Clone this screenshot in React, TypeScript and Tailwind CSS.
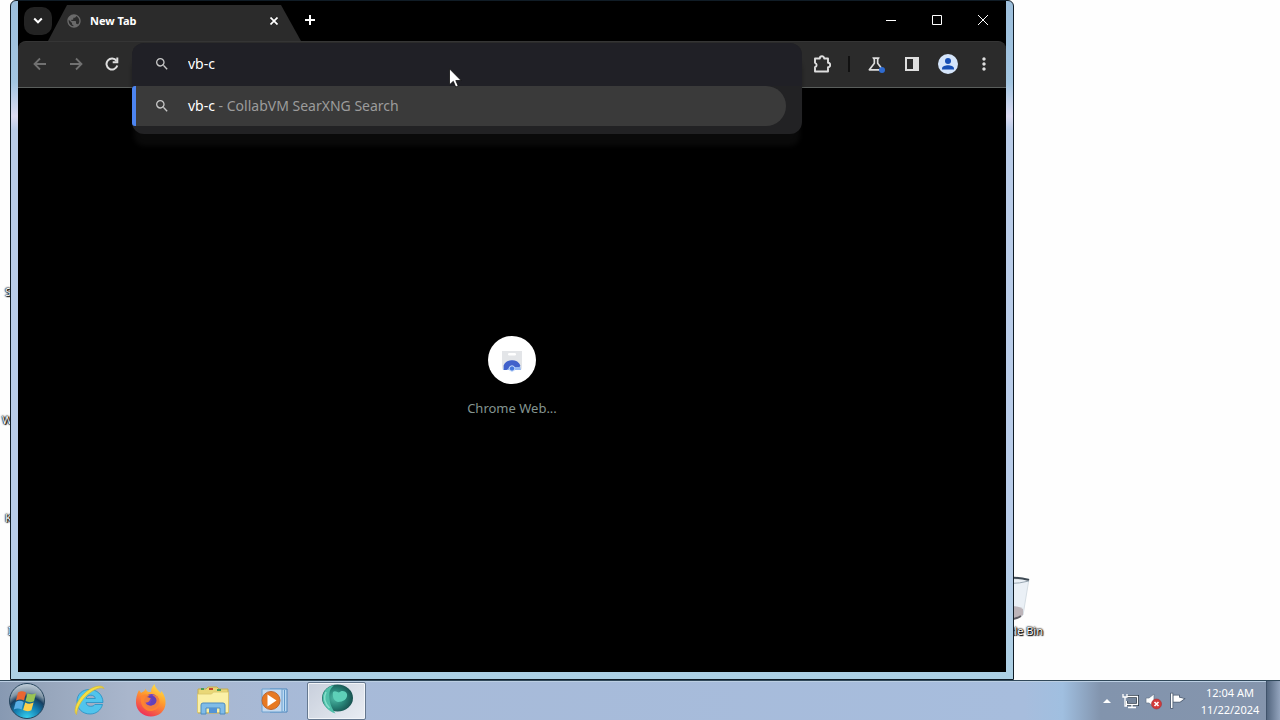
import React, { useState } from "react";
import {
  MdSearch,
  MdOutlineScience,
  MdMoreVert,
  MdPublic,
} from "react-icons/md";

function ToolButton({ label, children }: { label: string; children: React.ReactNode }) {
  return (
    <button type="button" aria-label={label} className="relative flex h-9 w-9 shrink-0 items-center justify-center text-[#dedede]">
      {children}
    </button>
  );
}

function CaptionButton({ label, children }: { label: string; children: React.ReactNode }) {
  return (
    <button type="button" aria-label={label} className="flex h-[38px] w-[46px] items-center justify-center text-white">
      <svg width="12" height="12" viewBox="0 0 12 12" fill="none" stroke="currentColor">
        {children}
      </svg>
    </button>
  );
}

function TabStrip() {
  return (
    <div className="flex h-10 shrink-0 items-start bg-black">
      <button type="button" aria-label="Search tabs" className="mt-[6px] ml-[6px] flex h-7 w-7 shrink-0 items-center justify-center rounded-[10px] bg-[#232323] text-white">
        <svg width="10" height="8" viewBox="0 0 10 8" fill="none" stroke="currentColor" strokeWidth="2">
          <path d="M1.200 1.500L5 5.300l3.800-3.800" />
        </svg>
      </button>
      <div className="-ml-1 mt-1 flex h-9 w-[253px] items-center bg-[#2b2b2b] pr-5 pb-1 pl-[18px] [clip-path:polygon(0_100%,19px_0,calc(100%_-_20px)_0,100%_100%)]">
        <MdPublic size={16} className="shrink-0 text-[#6a6a6a]" />
        <span className="ml-2 flex-1 text-[11px] font-bold text-white">New Tab</span>
        <button type="button" aria-label="Close tab" className="p-[3px] text-white">
          <svg width="8" height="8" viewBox="0 0 8 8" stroke="currentColor" strokeWidth="1.700">
            <path d="M.500.500l7 7M7.500.500l-7 7" />
          </svg>
        </button>
      </div>
      <button type="button" aria-label="New tab" className="mt-[10px] flex h-[18px] w-[18px] items-center justify-center text-white">
        <svg width="12" height="12" viewBox="0 0 12 12" stroke="currentColor" strokeWidth="2">
          <path d="M6 1v10M1 6h10" />
        </svg>
      </button>
      <div className="flex-1" />
      <CaptionButton label="Minimize">
        <path d="M1 6.500h10" />
      </CaptionButton>
      <CaptionButton label="Maximize">
        <path d="M1.500 1.500h9v9h-9z" />
      </CaptionButton>
      <CaptionButton label="Close">
        <path d="M1 1l10 10M11 1L1 11" />
      </CaptionButton>
    </div>
  );
}

function Omnibox() {
  const [query, setQuery] = useState("vb-c");
  return (
    <div className="relative mx-[2px] h-10 min-w-0 flex-1">
      <div className="absolute inset-x-0 -top-px z-10 rounded-xl bg-[#222224] pb-2 shadow-[0_14px_5px_-2px_#0a0a0a]">
        <label className="flex h-[43px] items-center rounded-t-xl bg-[#202026] pl-[22px]">
          <MdSearch size={16} className="shrink-0 text-[#c7c7c7]" />
          <input
            aria-label="Address and search bar"
            value={query}
            onChange={(e) => setQuery(e.target.value)}
            className="ml-[18px] min-w-0 flex-1 bg-transparent text-sm text-white outline-none"
          />
        </label>
        <button type="button" className="mr-4 flex h-10 w-[calc(100%_-_16px)] items-center rounded-l-[3px] rounded-r-[20px] border-l-4 border-[#4c84f0] bg-[#3a3a3a] pl-[18px] text-left text-sm">
          <MdSearch size={16} className="shrink-0 text-[#c7c7c7]" />
          <span className="ml-[18px] text-white">vb-c</span>
          <span className="whitespace-pre text-[#9c9c9c]"> - CollabVM SearXNG Search</span>
        </button>
      </div>
    </div>
  );
}

function Toolbar() {
  return (
    <div className="bg-black">
      <div className="flex h-[47px] items-center rounded-t-lg border-t border-b border-t-[#353535] border-b-[#5a5e5c] bg-[#2b2b2b] px-1 pb-[2px]">
        <ToolButton label="Back">
          <svg width="14" height="14" viewBox="0 0 14 14" fill="none" stroke="#717171" strokeWidth="1.800">
            <path d="M13 7H2M7 1.500L1.500 7 7 12.500" />
          </svg>
        </ToolButton>
        <ToolButton label="Forward">
          <svg width="14" height="14" viewBox="0 0 14 14" fill="none" stroke="#717171" strokeWidth="1.800">
            <path d="M1 7h11M7 1.500L12.500 7 7 12.500" />
          </svg>
        </ToolButton>
        <ToolButton label="Reload">
          <svg width="14" height="14" viewBox="0 0 14 14" fill="none" stroke="currentColor" strokeWidth="2">
            <path d="M12.300 8.500A5.500 5.500 0 1 1 11.500 3.800" />
            <path d="M12.300.500V5.300H7.700" />
          </svg>
        </ToolButton>
        <Omnibox />
        <ToolButton label="Extensions">
          <svg width="18" height="18" viewBox="0 0 18 18">
            <path d="M2 3.500h4.800a2.200 2.200 0 0 1 4.400 0H15v4.300a2.200 2.200 0 0 1 0 4.400V16.500H2v-4.300a2.300 2.300 0 0 0 0-4.400z" fill="none" stroke="currentColor" strokeWidth="1.900" strokeLinejoin="round" />
          </svg>
        </ToolButton>
        <span className="mx-2 h-4 w-[2px] shrink-0 bg-[#111]" />
        <ToolButton label="Experiments">
          <MdOutlineScience size={20} />
          <span className="absolute right-[9px] bottom-[9px] h-[6px] w-[6px] rounded-full bg-[#2f6bd0]" />
        </ToolButton>
        <ToolButton label="Side panel">
          <svg width="14" height="14" viewBox="0 0 14 14">
            <path d="M1 1h12v12H1z" fill="none" stroke="currentColor" strokeWidth="2" />
            <path d="M8 1h5v12H8z" fill="currentColor" />
          </svg>
        </ToolButton>
        <ToolButton label="Profile">
          <svg width="20" height="20" viewBox="0 0 20 20">
            <circle cx="10" cy="10" r="10" fill="#d5e5fb" />
            <circle cx="10" cy="7" r="3" fill="#174fb5" />
            <path d="M4 15.500v-1c0-2 3.500-3.200 6-3.200s6 1.200 6 3.200v1z" fill="#174fb5" />
          </svg>
        </ToolButton>
        <ToolButton label="Menu">
          <MdMoreVert size={20} />
        </ToolButton>
      </div>
    </div>
  );
}

function BrowserWindow() {
  return (
    <section className="absolute top-0 right-[266px] bottom-0 left-[10px] flex flex-col rounded-t-[6px] border border-[#101c26] bg-[linear-gradient(180deg,#9dbfdc_0%,#a3c6e2_12%,#dcdcf2_17%,#bacde9_19%,#b9cdea_80%,#acd0e4_100%)] px-[7px] pb-[7px]">
      <TabStrip />
      <Toolbar />
      <main className="flex flex-1 flex-col items-center bg-black pt-[248px]">
        <a href="#web-store" className="flex flex-col items-center">
          <span className="flex h-12 w-12 items-center justify-center rounded-full bg-white">
            <svg width="24" height="24" viewBox="0 0 24 24">
              <path d="M2 3h20v17a2 2 0 0 1-2 2H4a2 2 0 0 1-2-2z" fill="#e3e5e8" />
              <rect x="8" y="5" width="8" height="2.500" rx="1.200" fill="#fff" />
              <path d="M3 22a9 9.500 0 0 1 18 0z" fill="#91b5f3" />
              <path d="M3.600 17.500a9 8 0 0 1 16.800 0l-1 1.500h-5a3.500 3.500 0 0 0-6 1.500L6.500 22H4z" fill="#4161cb" />
              <circle cx="12" cy="20.500" r="2.700" fill="#4377df" stroke="#c6daf9" />
            </svg>
          </span>
          <span className="mt-[15px] text-[13px] leading-[18px] text-[#849590]">Chrome Web...</span>
        </a>
      </main>
    </section>
  );
}

function StartOrb() {
  return (
    <svg width="38" height="38" viewBox="0 0 38 38">
      <defs>
        <radialGradient id="orb" cx=".5" cy="1" r="1">
          <stop offset="0" stopColor="#38d4f2" />
          <stop offset=".4" stopColor="#1279ac" />
          <stop offset=".62" stopColor="#173f61" />
          <stop offset=".75" stopColor="#8195a5" />
          <stop offset="1" stopColor="#c4d1dd" />
        </radialGradient>
      </defs>
      <circle cx="19" cy="19" r="17.500" fill="url(#orb)" stroke="#26455e" />
      <path d="M10 10.500c3-2 5.500-1.500 8 0l-2 8c-2.500-1.500-5-1.500-8 0z" fill="#ea6631" />
      <path d="M19.500 11.200c3 1.600 5 1.500 8.500 0l-2 8c-3 1.400-5.500 1.200-8.500-.2z" fill="#99c354" />
      <path d="M7.700 20c3-1.800 5.300-1.500 7.900 0l-2 7.500c-2.600-1.500-5-1.500-7.800 0z" fill="#58aee6" />
      <path d="M17.200 20.500c3 1.600 5.500 1.500 8.400.1l-2.200 7.700c-3 1.400-5.500 1.200-8.300-.2z" fill="#ffd04a" />
    </svg>
  );
}

function ExplorerE() {
  return (
    <svg width="34" height="34" viewBox="0 0 34 34">
      <path d="M31 18.500H14c.3 2.500 2 3.800 4.600 3.800 2 0 3.400-.5 4.300-1.800h7.600c-1.700 6-6.500 9.500-12.400 9.500C10.600 30 5 25 5 17.500S10.400 5.500 17.500 5.500 31 10.500 31 18.500zM14 14.500h9.300c-.4-2.200-2.100-3.300-4.500-3.300s-4.200 1.200-4.800 3.300z" fill="#51c4ec" stroke="#238fc4" strokeWidth=".8" />
      <path d="M4.500 30.500C0 26 7 12 17.500 5.500 23.500 2 30 .500 32 4.500c-3-1.500-7-.5-12 2.800C11.500 12.500 5 22.500 4.500 30.500z" fill="#f6df45" stroke="#d6b92e" strokeWidth=".7" />
    </svg>
  );
}

function FirefoxMark() {
  return (
    <svg width="32" height="34" viewBox="0 0 32 34">
      <defs>
        <linearGradient id="fox" x1=".8" y1="0" x2=".3" y2="1">
          <stop offset="0" stopColor="#ffe849" />
          <stop offset=".45" stopColor="#ff9a2e" />
          <stop offset="1" stopColor="#ee2d5a" />
        </linearGradient>
      </defs>
      <path d="M4 6l2 3c1-1 2-1.500 3-1.800l2-2.700c0 2 1 3 2.500 3.500h2.500c0-4 2-6 3.500-8 .5 4 4 6 6 9l1-2c3 4 4.500 8 4 13C30 27 24 32.500 16 32.500S1.500 27 1 19c-.3-5 1-9 3-13z" fill="url(#fox)" />
      <circle cx="16.500" cy="17.500" r="7.500" fill="#7043c8" />
      <path d="M6 12c4-2 7-2 9 .2l3.500.6c0 1.300-1.500 2-3.500 2.400-.5 3-2.500 3.300-4.500 3.300 1 3 6 4.500 9 1s.5-7-2-8.500c5-.5 8 4 7 9-1 5-5 7-9 7-7 0-11-7-9.500-15z" fill="#ff852f" opacity=".9" />
      <path d="M12 13c4-3 10-.5 9.500 4-.5 4-5 5.500-9 3.500 2.500 0 3.500-1.500 3.500-3.500 1.500-.5 1.500-2.500-4-4z" fill="#6341b8" />
    </svg>
  );
}

function FolderMark() {
  return (
    <svg width="34" height="32" viewBox="0 0 34 32">
      <path d="M2 4h8l2-2h9l2 2h9v24H2z" fill="#e9d777" stroke="#c4ac52" />
      <path d="M5 3h3v2H5zM21 4h4v2h-4z" fill="#4a9c55" />
      <path d="M13 3h4v2h-4z" fill="#c8442c" />
      <path d="M1.500 9h14l2-2h15v20.500h-31z" fill="#fbf0a6" stroke="#d8c469" strokeWidth=".8" />
      <path d="M5 29V20q0-2 2-2h20q2 0 2 2v9h-5v-6H10v6z" fill="#80bce8" stroke="#4c8bc0" />
      <path d="M13 23h8v5h-8z" fill="#5293d5" />
    </svg>
  );
}

function MediaMark() {
  return (
    <svg width="30" height="28" viewBox="0 0 30 28">
      <path d="M10 2h17v23H10z" fill="#bcdaf2" stroke="#4c86bc" />
      <path d="M2 2h20v23H2z" fill="#c4d9ef" stroke="#6ba0cf" />
      <path d="M24.500 3v21" stroke="#5f97c9" />
      <circle cx="11" cy="13.500" r="9" fill="#e77922" stroke="#bd6630" />
      <path d="M7.500 7.500l9 6-9 6z" fill="#fff" />
    </svg>
  );
}

function GlobeMark() {
  return (
    <svg width="34" height="34" viewBox="0 0 34 34">
      <defs>
        <radialGradient id="globe" cx=".42" cy=".5" r=".6">
          <stop offset="0" stopColor="#4fb9a6" />
          <stop offset=".55" stopColor="#278276" />
          <stop offset="1" stopColor="#164d4c" />
        </radialGradient>
      </defs>
      <ellipse cx="17.500" cy="15" rx="15.500" ry="13.500" fill="url(#globe)" />
      <path d="M13 9c2-2 4 0 6 .5 2-2.500 7-2 8 1.500 1 5-4 8-9 8-4-1-6-5-5-10z" fill="#5ed0b8" />
      <path d="M3 12C5 6 9 3 14 2.500 9 6 9 11 9.500 16c.5 5 2 9 6 14.500C8 28 1.500 22 3 12z" fill="#4fbfa9" />
      <path d="M6 9c-2.500 5-1.500 11 3.500 16" fill="none" stroke="#9debd9" strokeWidth="1.500" opacity=".7" />
    </svg>
  );
}

function Tray() {
  return (
    <div className="flex h-full items-center text-white">
      <button type="button" aria-label="Show hidden icons" className="mr-2 flex h-5 w-3 items-center justify-center">
        <svg width="8" height="5" viewBox="0 0 8 5">
          <path d="M0 5l4-4 4 4z" fill="#fff" />
        </svg>
      </button>
      <svg width="18" height="18" viewBox="0 0 18 18" fill="none" className="mr-[6px]">
        <path d="M6 4.500h10.500v8H5.500V9" fill="#75859a" stroke="#2c3a48" strokeWidth="3" />
        <path d="M6 4.500h10.500v8H5.500V9M11 12.500v3M7 15.500h8M2 2v3h4V2M4 5v9h2" stroke="#fff" strokeWidth="1.300" />
      </svg>
      <svg width="18" height="18" viewBox="0 0 18 18" className="mr-[6px]">
        <path d="M1 6h3l5-4v13l-5-4H1z" fill="#fff" stroke="#66758a" strokeWidth=".7" />
        <circle cx="11.500" cy="12" r="5" fill="#d33a3a" stroke="#a52f35" strokeWidth=".6" />
        <path d="M9.500 10l4 4m0-4l-4 4" stroke="#fff" strokeWidth="1.600" />
      </svg>
      <svg width="18" height="18" viewBox="0 0 18 18" className="mr-3">
        <path d="M2 1.500h1.500V16H2zM4.500 3.500H10v2l5 1.300-4 3H4.500z" fill="#fff" stroke="#4b5a6e" strokeWidth="1.500" />
        <path d="M2 1.500h1.500V16H2zM4.500 3.500H10v2l5 1.300-4 3H4.500z" fill="#fff" />
      </svg>
      <time className="w-[62px] text-center text-[11px] leading-[17px]">
        12:04 AM
        <br />
        11/22/2024
      </time>
      <button type="button" aria-label="Show desktop" className="ml-[5px] h-full w-[14px] border-l border-[#40536b] bg-[linear-gradient(90deg,#53667f,#93a4bd)]" />
    </div>
  );
}

function Taskbar() {
  return (
    <footer className="flex h-10 shrink-0 items-center border-t border-[#30485a] bg-[linear-gradient(90deg,#8799b2_0%,#98a7bd_4%,#a9b6cc_10%,#a7bad8_24%,#a7bddd_80%,#a0bfe0_83%,#8294ad_86%,#8595ad_100%)] shadow-[inset_0_1px_0_#bccfe3]">
      <button type="button" aria-label="Start" className="ml-2 shrink-0">
        <StartOrb />
      </button>
      <button type="button" aria-label="Internet Explorer" className="ml-3 flex w-[62px] shrink-0 justify-center">
        <ExplorerE />
      </button>
      <button type="button" aria-label="Firefox" className="flex w-[62px] shrink-0 justify-center">
        <FirefoxMark />
      </button>
      <button type="button" aria-label="File Explorer" className="flex w-[62px] shrink-0 justify-center">
        <FolderMark />
      </button>
      <button type="button" aria-label="Media Player" className="flex w-[62px] shrink-0 justify-center">
        <MediaMark />
      </button>
      <button type="button" aria-label="Browser" className="ml-px flex h-[38px] w-[59px] shrink-0 items-start justify-center rounded-[2px] border border-[#65788f] bg-[linear-gradient(135deg,#c8cfdc,#e9edf3)] shadow-[inset_0_0_0_1px_#f2f5f9]">
        <GlobeMark />
      </button>
      <div className="flex-1" />
      <Tray />
    </footer>
  );
}

const hiddenLabels = [
  { text: "S", place: "top-[284px] left-[5px]" },
  { text: "W", place: "top-[412px] left-[2px]" },
  { text: "K", place: "top-[510px] left-[5px]" },
  { text: "I", place: "top-[623px] left-[8px]" },
];

export default function App() {
  return (
    <div className="flex h-screen flex-col overflow-hidden bg-[#fefefe] font-['Noto_Sans','Open_Sans',sans-serif]">
      <div className="relative min-h-0 flex-1">
        {hiddenLabels.map((label) => (
          <span key={label.text} className={`absolute text-[11px] leading-4 text-white [text-shadow:0_0_2px_#000,1px_1px_1px_#000,0_0_1px_#000,0_0_2px_#000] ${label.place}`}>
            {label.text}
          </span>
        ))}
        <div className="absolute right-[237px] bottom-[41px] flex flex-col items-end">
          <svg width="42" height="48" viewBox="0 0 42 48" className="mr-3">
            <path d="M2 4l5 36q12 8 27 0l6-36z" fill="#eaf0f6" stroke="#d5dde4" />
            <path d="M7 34q18-6 27 0v6q-14 8-27 2z" fill="#bcb4b9" />
            <path d="M18 44q8 1 14-3" fill="none" stroke="#5d5c63" strokeWidth="2" />
            <path d="M2 5q19-5 38 0" fill="none" stroke="#3f4a54" strokeWidth="2" />
            <path d="M2 6q19 5 38 0" fill="none" stroke="#9aa8b3" />
          </svg>
          <span className="text-[11px] leading-4 text-white [text-shadow:0_0_2px_#000,1px_1px_1px_#000,0_0_1px_#000,0_0_2px_#000]">Recycle Bin</span>
        </div>
        <BrowserWindow />
        <svg width="13" height="20" viewBox="0 0 13 20" className="absolute top-[68px] left-[449px] z-20">
          <path d="M.500.800v16l3.800-3.500 2.400 5.700 2.500-1-2.400-5.500h5.300z" fill="#fff" stroke="#111" strokeWidth=".8" />
        </svg>
      </div>
      <Taskbar />
    </div>
  );
}
